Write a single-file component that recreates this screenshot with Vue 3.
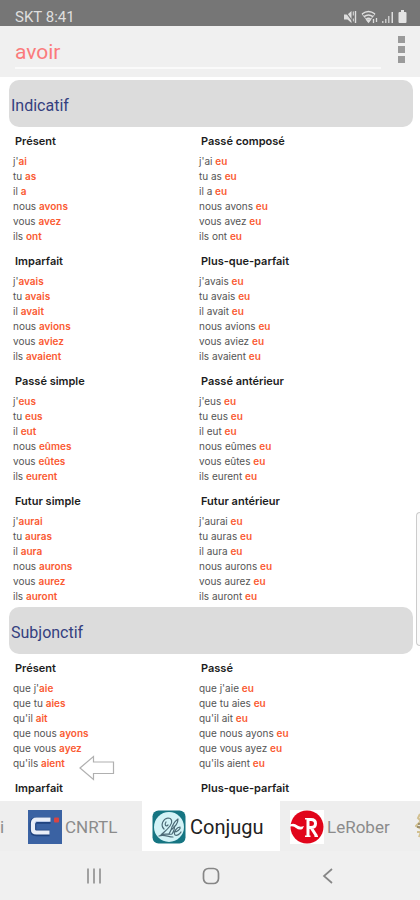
<script setup>
import { ref } from 'vue'

const query = ref('avoir')

const simple = (text) =>
  text.split(',').map((pair) => {
    const [lead, mark] = pair.split('|')
    return { lead, mark }
  })

const compound = (text) => text.split(',').map((lead) => ({ lead: lead + ' ', mark: 'eu' }))

const moods = [
  {
    name: 'Indicatif',
    tenses: [
      { name: 'Présent', forms: simple("j'|ai,tu |as,il |a,nous |avons,vous |avez,ils |ont") },
      { name: 'Passé composé', forms: compound("j'ai,tu as,il a,nous avons,vous avez,ils ont") },
      { name: 'Imparfait', forms: simple("j'|avais,tu |avais,il |avait,nous |avions,vous |aviez,ils |avaient") },
      { name: 'Plus-que-parfait', forms: compound("j'avais,tu avais,il avait,nous avions,vous aviez,ils avaient") },
      { name: 'Passé simple', forms: simple("j'|eus,tu |eus,il |eut,nous |eûmes,vous |eûtes,ils |eurent") },
      { name: 'Passé antérieur', forms: compound("j'eus,tu eus,il eut,nous eûmes,vous eûtes,ils eurent") },
      { name: 'Futur simple', forms: simple("j'|aurai,tu |auras,il |aura,nous |aurons,vous |aurez,ils |auront") },
      { name: 'Futur antérieur', forms: compound("j'aurai,tu auras,il aura,nous aurons,vous aurez,ils auront") },
    ],
  },
  {
    name: 'Subjonctif',
    tenses: [
      { name: 'Présent', forms: simple("que j'|aie,que tu |aies,qu'il |ait,que nous |ayons,que vous |ayez,qu'ils |aient") },
      { name: 'Passé', forms: compound("que j'aie,que tu aies,qu'il ait,que nous ayons,que vous ayez,qu'ils aient") },
      { name: 'Imparfait', forms: [] },
      { name: 'Plus-que-parfait', forms: [] },
    ],
  },
]
</script>

<template>
  <div class="screen">
    <div class="status">
      <span>SKT 8:41</span>
      <div class="status-icons">
        <svg width="14" height="14" viewBox="0 0 14 14" fill="#dedede">
          <path d="M1 4.500h3.500L8.500 1v12L4.500 9.500H1z" />
          <path d="M12.500 1v12" stroke="#dedede" stroke-width="1.400" fill="none" />
          <path d="M10.300 1.500v4M10.300 8.500v3" stroke="#dedede" stroke-width="1" fill="none" />
          <path d="M2 1l8 11" stroke="#767676" stroke-width="1.200" />
        </svg>
        <svg width="17" height="14" viewBox="0 0 17 14" fill="none" stroke="#dedede" stroke-width="1.500">
          <path d="M1 4Q7.500-.8 14 4M3 6.700Q7.500 3.200 12 6.700M5.200 9.300Q7.500 7.200 9.800 9.300" />
          <path d="M1 4L7.500 12L14 4" stroke-width=".8" />
          <path d="M6 10h3L7.500 12z" fill="#dedede" />
          <path d="M12.500 9v4M15.500 8v4" stroke-width="1.300" />
        </svg>
        <svg width="12" height="14" viewBox="0 0 12 14" fill="#dedede">
          <path d="M0 11h1.500v2H0zM3 9h1.500v4H3zM6 6h1.500v7H6z" opacity=".8" />
          <path d="M9.500 2H11v11H9.500z" />
        </svg>
        <svg width="9" height="14" viewBox="0 0 9 14" fill="#e4e4e4">
          <path d="M3 0h3v2h1.500q1 0 1 1v9q0 1-1 1h-6q-1 0-1-1V3q0-1 1-1H3z" />
        </svg>
      </div>
    </div>

    <header class="search">
      <input v-model="query" class="query" type="text" aria-label="Verbe" />
      <button class="more" aria-label="Menu"><i></i><i></i><i></i></button>
    </header>

    <main class="content">
      <section v-for="mood in moods" :key="mood.name">
        <h2 class="mood">{{ mood.name }}</h2>
        <div class="tenses">
          <div v-for="tense in mood.tenses" :key="tense.name">
            <h3 class="tense">{{ tense.name }}</h3>
            <ul class="forms">
              <li v-for="form in tense.forms" :key="form.lead + form.mark">{{ form.lead }}<b>{{ form.mark }}</b></li>
            </ul>
          </div>
        </div>
      </section>
    </main>

    <button class="back-arrow" aria-label="Précédent">
      <svg width="36" height="26" viewBox="0 0 36 26" fill="#fff" stroke="#b0b0b0" stroke-width="1.200">
        <path d="M1 13L14.500 1.500V7H34.500V18.500H14.500V24.500Z" />
      </svg>
    </button>
    <div class="edge-handle"></div>

    <nav class="tabs">
      <a href="#" class="tab tab-first">i</a>
      <a href="#" class="tab">
        <svg width="34" height="34" viewBox="0 0 34 34">
          <rect width="34" height="34" fill="#3a62a3" />
          <path d="M22.500 10.500H8.500Q5 10.500 5 13.500v6Q5 23 8.500 23h13" fill="none" stroke="#1f4380" stroke-width="6.500" />
          <path d="M22.500 9.700H8.500Q5 9.700 5 13v6.500Q5 22.500 8.500 22.500h13" fill="none" stroke="#e9eef8" stroke-width="4.200" />
          <path d="M21 11.500H9Q7 11.500 7 13.500" fill="none" stroke="#b9c9e8" stroke-width="1" />
          <rect x="26" y="7.500" width="5" height="5" rx="1" fill="#d84543" />
        </svg>
        <span>CNRTL</span>
      </a>
      <a href="#" class="tab active" aria-current="page">
        <svg width="34" height="34" viewBox="0 0 34 34">
          <rect x=".5" y=".5" width="33" height="33" rx="6" fill="#167582" />
          <circle cx="17" cy="17" r="15" fill="#d3f3f7" />
          <g fill="none" stroke="#4c6a76" stroke-width="1.200" stroke-linecap="round" stroke-linejoin="round">
            <path d="M12 19C8 15 11 9 16 8C20 8 21 12 18 16C15 20 12 22 9 25C13 23 17 25 20 24C22 21 23 18 22 16" />
            <path d="M26 9C22 12 20 16 19 20C23 17 26 13 26 9M19 20L17 24" />
            <path d="M22 22C25 22 29 19 28 17C25 17 21 22 23 25C25 26 28 24 29 22" />
            <path d="M7 26C12 24 16 27 21 27M14 12C12 15 14 17 16 15" />
          </g>
        </svg>
        <span>Conjugu</span>
      </a>
      <a href="#" class="tab tab-wide">
        <svg width="34" height="34" viewBox="0 0 34 34">
          <rect width="34" height="34" fill="#fff" />
          <circle cx="17" cy="17" r="16.500" fill="#e1051b" />
          <path d="M0 14.500Q4 12.500 7.500 15.500Q10 17.500 14 16L12.500 19Q9 20.500 6 18Q3.500 15.500 0 16.500Z" fill="#fff" />
          <path d="M18 26V9.500H21Q25.500 9.500 25.500 13.500Q25.500 17.500 21 17.500H18M21 17.500L26.500 26" fill="none" stroke="#fff" stroke-width="3" />
          <path d="M15 8.700H20M15 26.200H20.500M24.500 26.200H28" stroke="#fff" stroke-width="1.400" />
        </svg>
        <span>LeRober</span>
      </a>
      <a href="#" class="tab tab-last" aria-label="Dictionnaire">
        <svg width="34" height="34" viewBox="0 0 34 34" fill="none" stroke="#d2c08f" stroke-width="2">
          <path d="M5 4L3 8L6 11L1 16L6 19M2 22H6L4 27" />
          <path d="M3 14H7V17H2" stroke="#8d8164" stroke-width="1.400" />
        </svg>
      </a>
    </nav>

    <footer class="system">
      <button aria-label="Applications récentes">
        <svg width="20" height="20" viewBox="0 0 20 20" stroke="#868686" stroke-width="1.500"><path d="M4 2.500v15M10 2.500v15M16 2.500v15" /></svg>
      </button>
      <button aria-label="Accueil">
        <svg width="20" height="20" viewBox="0 0 20 20" fill="none" stroke="#868686" stroke-width="1.700"><rect x="2.500" y="2.500" width="15" height="15" rx="5" /></svg>
      </button>
      <button aria-label="Retour">
        <svg width="20" height="20" viewBox="0 0 20 20" fill="none" stroke="#868686" stroke-width="1.700"><path d="M14 3L6 10l8 7" /></svg>
      </button>
    </footer>
  </div>
</template>

<style>
body {
  margin: 0;
  background: #fff;
}
</style>

<style scoped>
.screen {
  position: relative;
  display: flex;
  flex-direction: column;
  height: 100vh;
  overflow: hidden;
  font-family: Roboto, "Liberation Sans", sans-serif;
  background: #fff;
}
button {
  padding: 0;
  border: 0;
  background: none;
}
svg {
  display: block;
  flex: none;
}
.status {
  display: flex;
  flex: none;
  justify-content: space-between;
  box-sizing: border-box;
  height: 26px;
  padding: 8px 13px 0 15px;
  background: #767676;
  color: #dedede;
  font-size: 15px;
  line-height: 18px;
}
.status-icons {
  display: flex;
  gap: 4px;
  padding-top: 2px;
}
.search {
  display: flex;
  flex: none;
  box-sizing: border-box;
  height: 51px;
  padding: 9px 15px 8px;
  background: #f0f0f0;
}
.query {
  flex: 1;
  min-width: 0;
  margin-right: 17px;
  padding: 2px 0 0;
  border: 0;
  border-bottom: 2px solid #fafafa;
  outline: 0;
  background: none;
  color: #fb7b7c;
  font-family: inherit;
  font-size: 21px;
}
.more {
  display: flex;
  flex-direction: column;
  gap: 3px;
  padding: 1px 0;
}
.more i {
  width: 7px;
  height: 7px;
  background: #9a9a9a;
}
.content {
  flex: 1;
  min-height: 0;
  overflow: hidden;
  padding-top: 3px;
}
.mood {
  box-sizing: border-box;
  height: 47px;
  margin: 0 7px 0 9px;
  padding: 3px 2px 0;
  border-radius: 10px;
  background: #dcdcdc;
  color: #34407f;
  font-size: 16px;
  font-weight: 400;
  line-height: 46px;
}
.tenses {
  display: grid;
  grid-template-columns: 1fr 1fr;
  padding: 0 35px 0 13px;
}
.tense {
  height: 27px;
  margin: 0 0 0 2px;
  color: #1c1c1c;
  font-family: Inter, sans-serif;
  font-size: 11px;
  font-weight: 600;
  line-height: 28px;
}
.forms {
  margin: 0;
  padding: 0 0 3px;
  list-style: none;
  color: #555;
  font-family: Inter, sans-serif;
  font-size: 10px;
  line-height: 15px;
}
.forms b {
  color: #fa5a32;
  font-weight: 600;
}
.back-arrow {
  position: absolute;
  bottom: 119px;
  left: 79px;
}
.edge-handle {
  position: absolute;
  top: 512px;
  right: 0;
  box-sizing: border-box;
  width: 4px;
  height: 134px;
  border: 1px solid #ccc;
  border-right: 0;
  border-radius: 4px 0 0 4px;
  background: #fafafa;
}
.tabs {
  display: flex;
  flex: none;
  height: 50px;
  overflow: hidden;
  background: #eee;
}
.tab {
  display: flex;
  flex: 1 0 124px;
  align-items: center;
  gap: 3px;
  box-sizing: border-box;
  padding: 2px 10px 0;
  color: #8b8b8b;
  font-size: 17px;
  text-decoration: none;
}
.tab.active {
  flex-basis: 138px;
  gap: 4px;
  background: #fff;
  color: #222;
  font-size: 20px;
}
.tab-wide {
  flex-basis: 135px;
}
.tab-first,
.tab-last {
  flex: none;
  padding: 2px 0 0;
}
.tab-first {
  width: 18px;
}
.tab-last {
  width: 5px;
}
.system {
  display: flex;
  flex: none;
  justify-content: space-between;
  align-items: center;
  height: 49px;
  padding: 0 82px 0 84px;
  background: #f0f0f0;
}
</style>
